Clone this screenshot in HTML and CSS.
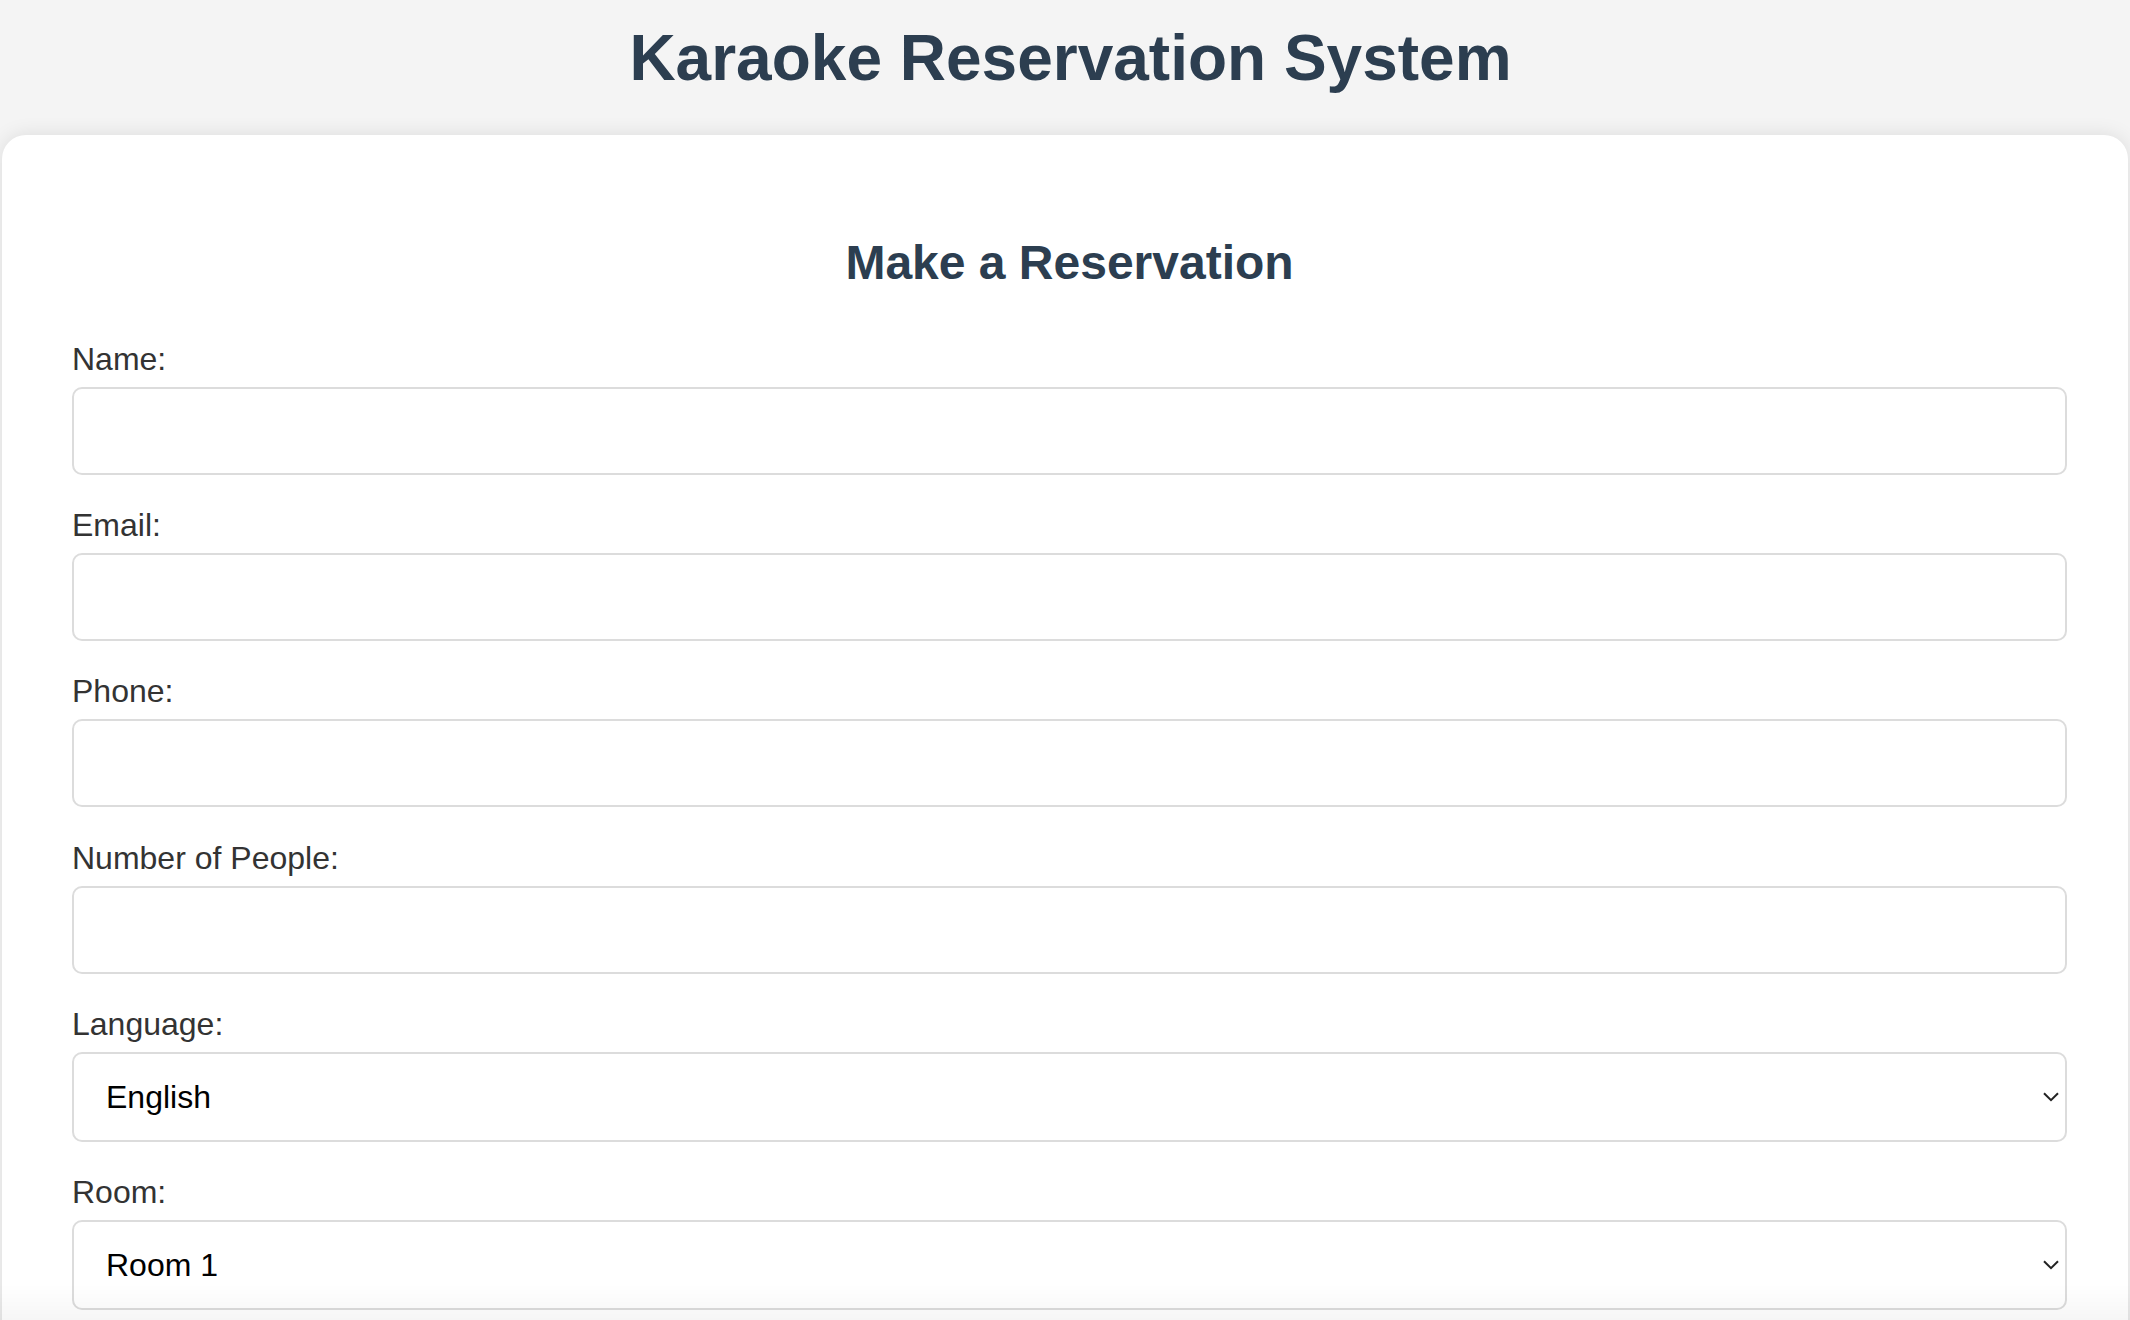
FILE: index.html
```html
<!DOCTYPE html>
<html lang="en">
<head>
<meta charset="utf-8">
<title>Karaoke Reservation System</title>
<link rel="stylesheet" href="styles.css">
</head>
<body>
<header class="page-header">
  <h1 class="page-title">Karaoke Reservation System</h1>
</header>
<main class="card">
  <h2 class="card-title">Make a Reservation</h2>
  <form class="form">
    <div class="field">
      <label class="field-label" for="name">Name:</label>
      <input class="field-input" type="text" id="name">
    </div>
    <div class="field">
      <label class="field-label" for="email">Email:</label>
      <input class="field-input" type="email" id="email">
    </div>
    <div class="field">
      <label class="field-label" for="phone">Phone:</label>
      <input class="field-input" type="tel" id="phone">
    </div>
    <div class="field">
      <label class="field-label" for="people">Number of People:</label>
      <input class="field-input" type="number" id="people">
    </div>
    <div class="field">
      <label class="field-label" for="language">Language:</label>
      <div class="select-wrap">
        <select class="field-select" id="language">
          <option>English</option>
          <option>Japanese</option>
          <option>Korean</option>
          <option>Chinese</option>
        </select>
        <svg class="chevron" width="16" height="10" viewBox="0 0 16 10"><path d="M1 1.2 L8 8.2 L15 1.2" fill="none" stroke="#222" stroke-width="2"/></svg>
      </div>
    </div>
    <div class="field">
      <label class="field-label" for="room">Room:</label>
      <div class="select-wrap">
        <select class="field-select" id="room">
          <option>Room 1</option>
          <option>Room 2</option>
          <option>Room 3</option>
        </select>
        <svg class="chevron" width="16" height="10" viewBox="0 0 16 10"><path d="M1 1.2 L8 8.2 L15 1.2" fill="none" stroke="#222" stroke-width="2"/></svg>
      </div>
    </div>
  </form>
</main>
<div class="bottom-fade"></div>
</body>
</html>
```
FILE: styles.css
```css
html, body {
  margin: 0;
  padding: 0;
}
body {
  background: #f4f4f4;
  font-family: "Liberation Sans", Arial, Helvetica, sans-serif;
  color: #333;
}
.page-header {
  padding: 0 61px 0 72px;
}
.page-title {
  margin: 21px 0 40px;
  font-size: 64px;
  line-height: 74px;
  font-weight: bold;
  text-align: center;
  color: #2c3e50;
}
.card {
  margin: 0 2px;
  background: #fff;
  border-radius: 24px;
  box-shadow: 0 0 20px rgba(0, 0, 0, 0.1);
  padding: 40px 61px 60px 70px;
}
.card-title {
  margin: 60px 0 50px;
  font-size: 48px;
  line-height: 56px;
  font-weight: bold;
  text-align: center;
  color: #2c3e50;
}
.form {
  display: flex;
  flex-direction: column;
  gap: 32.2px;
}
.field {
  display: flex;
  flex-direction: column;
}
.field-label {
  font-size: 32px;
  line-height: 36px;
  color: #333;
  margin-bottom: 10px;
}
.field-input {
  box-sizing: border-box;
  width: 100%;
  height: 88px;
  margin: 0;
  border: 2px solid #dcdcdc;
  border-radius: 10px;
  background: #fff;
  font-family: inherit;
  font-size: 32px;
  padding: 0 20px;
  outline: none;
}
.select-wrap {
  position: relative;
}
.field-select {
  box-sizing: border-box;
  width: 100%;
  height: 90px;
  margin: 0;
  border: 2px solid #dcdcdc;
  border-radius: 10px;
  background: #fff;
  font-family: "Liberation Sans", Arial, Helvetica, sans-serif;
  font-size: 32px;
  color: #000;
  padding: 0 60px 0 32px;
  -webkit-appearance: none;
  appearance: none;
  outline: none;
}
.chevron {
  position: absolute;
  right: 8px;
  top: 40px;
  pointer-events: none;
}
.bottom-fade {
  position: fixed;
  left: 0;
  right: 0;
  bottom: 0;
  height: 36px;
  background: linear-gradient(to bottom, rgba(0, 0, 0, 0), rgba(0, 0, 0, 0.035));
  pointer-events: none;
}
```
